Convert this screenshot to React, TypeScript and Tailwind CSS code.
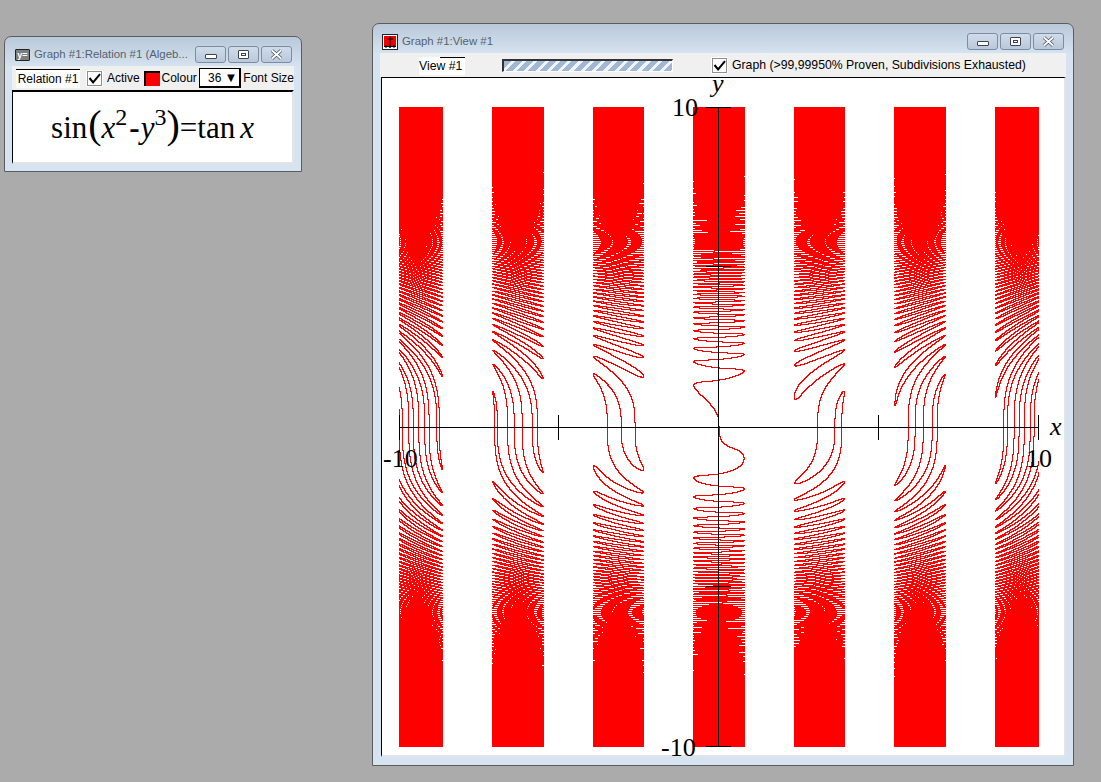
import React, { useMemo } from 'react';

const PI = Math.PI;
const TWO_PI = Math.PI * 2;

// range of sin over [lo, hi]
function sinRange(lo: number, hi: number): [number, number] {
  if (hi - lo >= TWO_PI) return [-1, 1];
  const a = Math.sin(lo);
  const b = Math.sin(hi);
  let min = Math.min(a, b);
  let max = Math.max(a, b);
  if (Math.ceil((lo - PI / 2) / TWO_PI) <= (hi - PI / 2) / TWO_PI) max = 1;
  if (Math.ceil((lo + PI / 2) / TWO_PI) <= (hi + PI / 2) / TWO_PI) min = -1;
  return [min, max];
}

// can sin(x^2 - y^3) = tan x hold somewhere in this box?
function hasSolution(x0: number, x1: number, y0: number, y1: number, depth: number): boolean {
  const t0 = Math.tan(x0);
  const t1 = Math.tan(x1);
  const pole = Math.floor((x0 + PI / 2) / PI) !== Math.floor((x1 + PI / 2) / PI);
  if (pole && t0 > 1 && t1 < -1) return false;
  if (!pole && (t0 > 1 || t1 < -1)) return false;

  const sqLo = x0 <= 0 && x1 >= 0 ? 0 : Math.min(x0 * x0, x1 * x1);
  const sqHi = Math.max(x0 * x0, x1 * x1);
  const lo = sqLo - y1 * y1 * y1;
  const hi = sqHi - y0 * y0 * y0;
  const [s0, s1] = sinRange(lo, hi);
  if (!pole && (s1 < t0 || s0 > t1)) return false;
  if (depth === 0) return true;

  const xWidth = (sqHi - sqLo) + (x1 - x0) * 2;
  const yWidth = y1 * y1 * y1 - y0 * y0 * y0;
  if (yWidth > xWidth) {
    const m = (y0 + y1) / 2;
    return hasSolution(x0, x1, y0, m, depth - 1) || hasSolution(x0, x1, m, y1, depth - 1);
  }
  const m = (x0 + x1) / 2;
  return hasSolution(x0, m, y0, y1, depth - 1) || hasSolution(m, x1, y0, y1, depth - 1);
}

function buildPlotPath() {
  const size = 640;
  const scale = 32;
  let d = '';
  for (let r = 0; r < size; r++) {
    const yHi = 10 - r / scale;
    const yLo = 10 - (r + 1) / scale;
    let start = -1;
    for (let c = 0; c <= size; c++) {
      const on = c < size && hasSolution(-10 + c / scale, -10 + (c + 1) / scale, yLo, yHi, 14);
      if (on && start < 0) start = c;
      if (!on && start >= 0) {
        d += `M${start} ${r}h${c - start}v1h${start - c}z`;
        start = -1;
      }
    }
  }
  return d;
}

const CaptionButtons = () => (
  <div className="flex gap-[2px] mt-[9px] mr-[9px]">
    <div className="w-[31px] h-[17px] rounded-[3px] border border-[#7d8ca3] bg-gradient-to-b from-[#d0dcea] to-[#b9c8da] flex items-center justify-center">
      <div className="w-[12px] h-[5px] mt-[3px] border border-[#3d4450] bg-white rounded-[1px]" />
    </div>
    <div className="w-[31px] h-[17px] rounded-[3px] border border-[#7d8ca3] bg-gradient-to-b from-[#d0dcea] to-[#b9c8da] flex items-center justify-center">
      <div className="w-[11px] h-[9px] border border-[#3d4450] bg-white rounded-[1px] flex items-center justify-center">
        <div className="w-[5px] h-[3px] border border-[#3d4450]" />
      </div>
    </div>
    <div className="w-[31px] h-[17px] rounded-[3px] border border-[#7d8ca3] bg-gradient-to-b from-[#d0dcea] to-[#b9c8da] flex items-center justify-center">
      <svg width="13" height="11" viewBox="0 0 13 11">
        <path d="M2 1.5l9 8M11 1.5l-9 8" stroke="#4a5260" strokeWidth="3.4" />
        <path d="M2 1.5l9 8M11 1.5l-9 8" stroke="#fff" strokeWidth="1.8" />
      </svg>
    </div>
  </div>
);

const CheckBox = () => (
  <div className="w-[15px] h-[15px] border border-[#8f8f8f] bg-white flex items-center justify-center shrink-0 outline outline-1 outline-white">
    <svg width="13" height="13" viewBox="0 0 13 13">
      <path d="M1.5 6l3.6 4.4L12 2.2" fill="none" stroke="#000" strokeWidth="2" />
    </svg>
  </div>
);

const RelationWindow = () => (
  <div className="absolute left-[4px] top-[36px] w-[298px] h-[136px] border border-[#5c5c5c] rounded-t-[7px] bg-[#d6e3f0] bg-gradient-to-b from-[#b9c9d9] to-[#d6e3f0] bg-[length:100%_30px] bg-no-repeat flex flex-col">
    <div className="h-[29px] flex justify-between shrink-0">
      <div className="flex items-center pl-[10px] pt-[7px] gap-[4px] whitespace-nowrap">
        <div className="w-[15px] h-[12px] border border-[#222] bg-[#7e7e7e] rounded-[1px] text-white text-[9px] leading-[10px] text-center font-bold">y=</div>
        <span className="text-[11.4px] text-[#566270]">Graph #1:Relation #1 (Algeb...</span>
      </div>
      <CaptionButtons />
    </div>
    <div className="mx-[7px] h-[24px] bg-[#f0f0f0] flex items-center text-[12px] text-black shrink-0 whitespace-nowrap">
      <div className="ml-[4px] w-[65px] h-[19px] mt-[1px] bg-white border-t border-black text-center leading-[18px]">Relation #1</div>
      <div className="ml-[7px]"><CheckBox /></div>
      <span className="ml-[5px]">Active</span>
      <div className="ml-[4px] w-[16px] h-[15px] border-t-2 border-l-2 border-black bg-[#ff0000]" />
      <span className="ml-[2px]">Colour</span>
      <div className="ml-[2px] w-[43px] h-[20px] border border-black border-r-2 border-b-2 bg-white flex items-center justify-end pr-[2px] gap-[3px]">
        <span>36</span>
        <span className="text-[13px] leading-none">▼</span>
      </div>
      <span className="ml-[2px]">Font Size</span>
    </div>
    <div className="mx-[7px] h-[74px] bg-white border-t-2 border-l border-black border-r-2 border-r-[#e4e4e4] border-b-2 border-b-[#e4e4e4] flex justify-center text-black font-['Liberation_Serif',serif] text-[31px] leading-none pt-[18px]">
      <div className="flex items-baseline whitespace-nowrap h-[31px]">
        <span>sin</span>
        <span className="text-[40px] leading-[30px] ml-[1px]">(</span>
        <span className="italic">x</span>
        <span className="text-[24px] relative -top-[13px]">2</span>
        <span className="font-bold ml-[2px]">-</span>
        <span className="italic ml-[1px]">y</span>
        <span className="text-[24px] relative -top-[13px]">3</span>
        <span className="text-[40px] leading-[30px]">)</span>
        <span>=tan</span>
        <span className="italic ml-[5px]">x</span>
      </div>
    </div>
  </div>
);

const Plot = () => {
  const d = useMemo(buildPlotPath, []);
  // origin of the 640px plot inside the view pane
  const ox = 17;
  const oy = 29;
  const cx = ox + 319;
  const cy = oy + 320;
  return (
    <svg width="682" height="678" className="block overflow-visible font-['Liberation_Serif',serif]">
      <path d={d} transform={`translate(${ox} ${oy})`} fill="#ff0000" shapeRendering="crispEdges" />
      <g stroke="#000" strokeWidth="1" shapeRendering="crispEdges">
        <path d={`M${ox} ${cy + 0.5}H${ox + 640}M${cx + 0.5} ${oy}V${oy + 640}`} />
        <path d={`M${ox + 0.5} ${cy - 12}v25M${ox + 159.5} ${cy - 12}v25M${ox + 479.5} ${cy - 12}v25M${ox + 639.5} ${cy - 12}v25`} />
        <path d={`M${cx - 12} ${oy + 0.5}h25M${cx - 12} ${oy + 159.5}h25M${cx - 12} ${oy + 479.5}h25M${cx - 12} ${oy + 639.5}h25`} />
      </g>
      <g fontSize="26" fill="#000">
        <text x={290} y={38}>10</text>
        <text x={1} y={389}>-10</text>
        <text x={644} y={389}>10</text>
        <text x={279} y={678}>-10</text>
        <text x={668} y={357} fontStyle="italic">x</text>
        <text x={330} y={14} fontStyle="italic">y</text>
      </g>
    </svg>
  );
};

const ViewWindow = () => (
  <div className="absolute left-[372px] top-[23px] w-[702px] h-[743px] border border-[#5c5c5c] rounded-t-[7px] bg-[#d6e3f0] bg-gradient-to-b from-[#b9c9d9] to-[#d6e3f0] bg-[length:100%_30px] bg-no-repeat flex flex-col">
    <div className="h-[29px] flex justify-between shrink-0">
      <div className="flex items-center pl-[9px] pt-[7px] gap-[4px] whitespace-nowrap">
        <div className="w-[16px] h-[16px] border border-[#222] bg-white flex items-center justify-center">
          <svg width="14" height="14" viewBox="0 0 14 14">
            <rect x="1" y="1" width="12" height="10" fill="#f00000" />
            <path d="M7 1v12M4 4h6M1 11.5h12M3 10v3M7 10v3M11 10v3" stroke="#000" strokeWidth="1" />
          </svg>
        </div>
        <span className="text-[11.4px] text-[#566270]">Graph #1:View #1</span>
      </div>
      <CaptionButtons />
    </div>
    <div className="mx-[7px] h-[24px] bg-[#f0f0f0] flex items-center text-[12.25px] text-black shrink-0 whitespace-nowrap">
      <div className="ml-[39px] w-[46px] h-[18px] mt-[1px] bg-white flex flex-col items-end">
        <div className="w-[25px] h-[1px] bg-black shrink-0" />
        <div className="w-full leading-[16px]">View #1</div>
      </div>
      <div className="ml-[37px] w-[171px] h-[13px] border-t-2 border-l-2 border-[#333] border-r border-b border-r-white border-b-white bg-[repeating-linear-gradient(135deg,#a0b8d4_0px,#a0b8d4_5px,#f0f4f8_5px,#f0f4f8_8px)]" />
      <div className="ml-[39px]"><CheckBox /></div>
      <span className="ml-[5px]">Graph (&gt;99,99950% Proven, Subdivisions Exhausted)</span>
    </div>
    <div className="ml-[8px] mr-[7px] mb-[8px] flex-1 min-h-0 bg-white border-t border-l border-black border-r-2 border-r-[#e4e4e4] border-b-2 border-b-[#e4e4e4]">
      <Plot />
    </div>
  </div>
);

export default function App() {
  return (
    <div className="relative w-[1101px] h-[782px] bg-[#ababab] overflow-hidden font-['Liberation_Sans',sans-serif]">
      <RelationWindow />
      <ViewWindow />
    </div>
  );
}
